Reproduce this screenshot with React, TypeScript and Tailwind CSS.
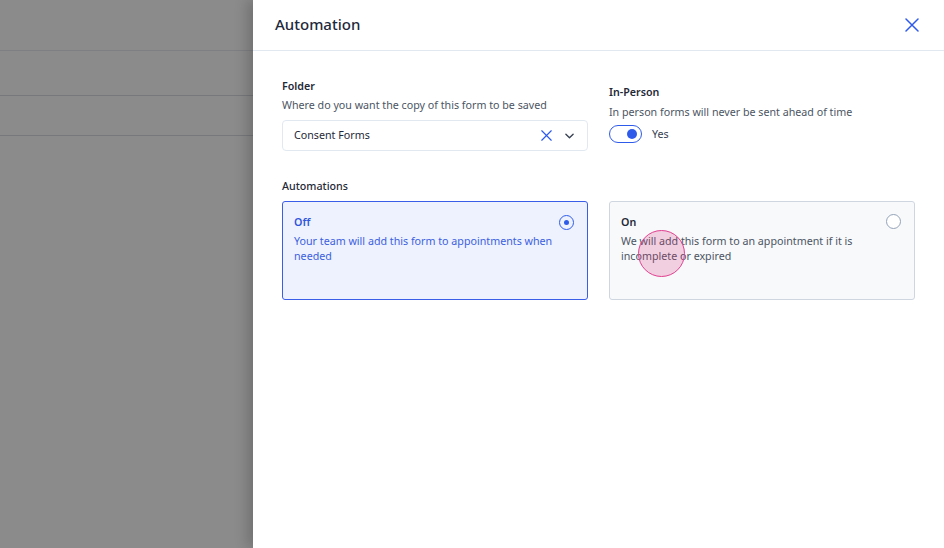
import React from "react";

function CloseIcon({ className }: { className?: string }) {
  return (
    <svg viewBox="0 0 14 14" className={className} fill="none" stroke="currentColor" strokeWidth="1.5" strokeLinecap="round">
      <path d="M1 1L13 13M13 1L1 13" />
    </svg>
  );
}

function Chevron({ className }: { className?: string }) {
  return (
    <svg viewBox="0 0 10 6" className={className} fill="none" stroke="currentColor" strokeWidth="1.5" strokeLinecap="round" strokeLinejoin="round">
      <path d="M1 1L5 5L9 1" />
    </svg>
  );
}

export default function App() {
  return (
    <div
      className="relative flex w-[944px] h-[548px] overflow-hidden bg-white"
      style={{ fontFamily: '"Noto Sans", "Open Sans", sans-serif' }}
    >
      {/* dimmed background page */}
      <div className="w-[253px] shrink-0 bg-[#8b8b8c] flex flex-col">
        <div className="h-[51px] border-b border-[#7d7f83]" />
        <div className="h-[45px] border-b border-[#76787c]" />
        <div className="h-[40px] border-b border-[#76787c]" />
      </div>

      {/* side panel */}
      <div className="relative flex-1 bg-white flex flex-col shadow-[-6px_0_12px_rgba(0,0,0,0.18)]">
        <div className="h-[51px] shrink-0 border-b border-[#e2e8f0] flex items-center justify-between pl-[22px] pr-[25px]">
          <div className="text-[15px] font-medium text-[#1e293b] leading-none pb-[2px]">Automation</div>
          <CloseIcon className="w-[14px] h-[14px] text-[#2f5bea]" />
        </div>

        <div className="px-[29px] pt-[27px]">
          <div className="grid grid-cols-2 gap-x-[21px]">
            <div className="flex flex-col">
              <div className="text-[10.7px] leading-[16px] font-semibold text-[#1f2937]">Folder</div>
              <div className="mt-[3px] text-[10.7px] leading-[16px] text-[#4b5563]">
                Where do you want the copy of this form to be saved
              </div>
              <div className="mt-[7px] h-[31px] rounded-[4px] border border-[#e2e8f0] flex items-center pl-[11px] pr-[13px]">
                <div className="flex-1 text-[10.7px] text-[#1f2937]">Consent Forms</div>
                <CloseIcon className="w-[11px] h-[11px] text-[#2f5bea]" />
                <Chevron className="ml-[13px] w-[9px] h-[6px] text-[#374151]" />
              </div>
            </div>
            <div className="flex flex-col pt-[6px]">
              <div className="text-[10.7px] leading-[16px] font-semibold text-[#1f2937]">In-Person</div>
              <div className="mt-[4px] text-[10.7px] leading-[16px] text-[#4b5563]">
                In person forms will never be sent ahead of time
              </div>
              <div className="mt-[5px] flex items-center">
                <div className="w-[33px] h-[18px] rounded-full border-[1.5px] border-[#2f5bea] bg-white flex items-center justify-end pr-[4px]">
                  <div className="w-[10px] h-[10px] rounded-full bg-[#2f5bea]" />
                </div>
                <div className="ml-[10px] text-[10.7px] text-[#374151]">Yes</div>
              </div>
            </div>
          </div>

          <div className="mt-[27px] text-[10.7px] leading-[16px] font-medium text-[#1f2937]">Automations</div>

          <div className="mt-[7px] grid grid-cols-2 gap-x-[21px]">
            <div className="h-[99px] rounded-[3px] border border-[#3b5ee8] bg-[#eef2fe] flex pl-[11px] pr-[13px] pt-[12px]">
              <div className="flex-1 pr-[4px]">
                <div className="text-[10.7px] leading-[16px] font-semibold text-[#2f55dd]">Off</div>
                <div className="mt-[4px] text-[10.7px] leading-[15px] text-[#3b5fe0]">
                  Your team will add this form to appointments when needed
                </div>
              </div>
              <div className="mt-[1px] w-[15px] h-[15px] rounded-full border-[1.5px] border-[#2f5bea] flex items-center justify-center shrink-0">
                <div className="w-[5px] h-[5px] rounded-full bg-[#2f5bea]" />
              </div>
            </div>
            <div className="h-[99px] rounded-[3px] border border-[#cfd6e0] bg-[#f8f9fb] flex pl-[11px] pr-[13px] pt-[12px]">
              <div className="flex-1 pr-[4px]">
                <div className="text-[10.7px] leading-[16px] font-semibold text-[#1f2937]">On</div>
                <div className="mt-[4px] text-[10.7px] leading-[15px] text-[#4b5563]">
                  We will add this form to an appointment if it is incomplete or expired
                </div>
              </div>
              <div className="w-[15px] h-[15px] rounded-full border border-[#94a3b8] bg-white shrink-0" />
            </div>
          </div>
        </div>

        {/* touch indicator */}
        <div className="absolute left-[385px] top-[230px] w-[47px] h-[47px] rounded-full border border-[#e0408f] bg-[rgba(219,39,119,0.2)]" />
      </div>
    </div>
  );
}
